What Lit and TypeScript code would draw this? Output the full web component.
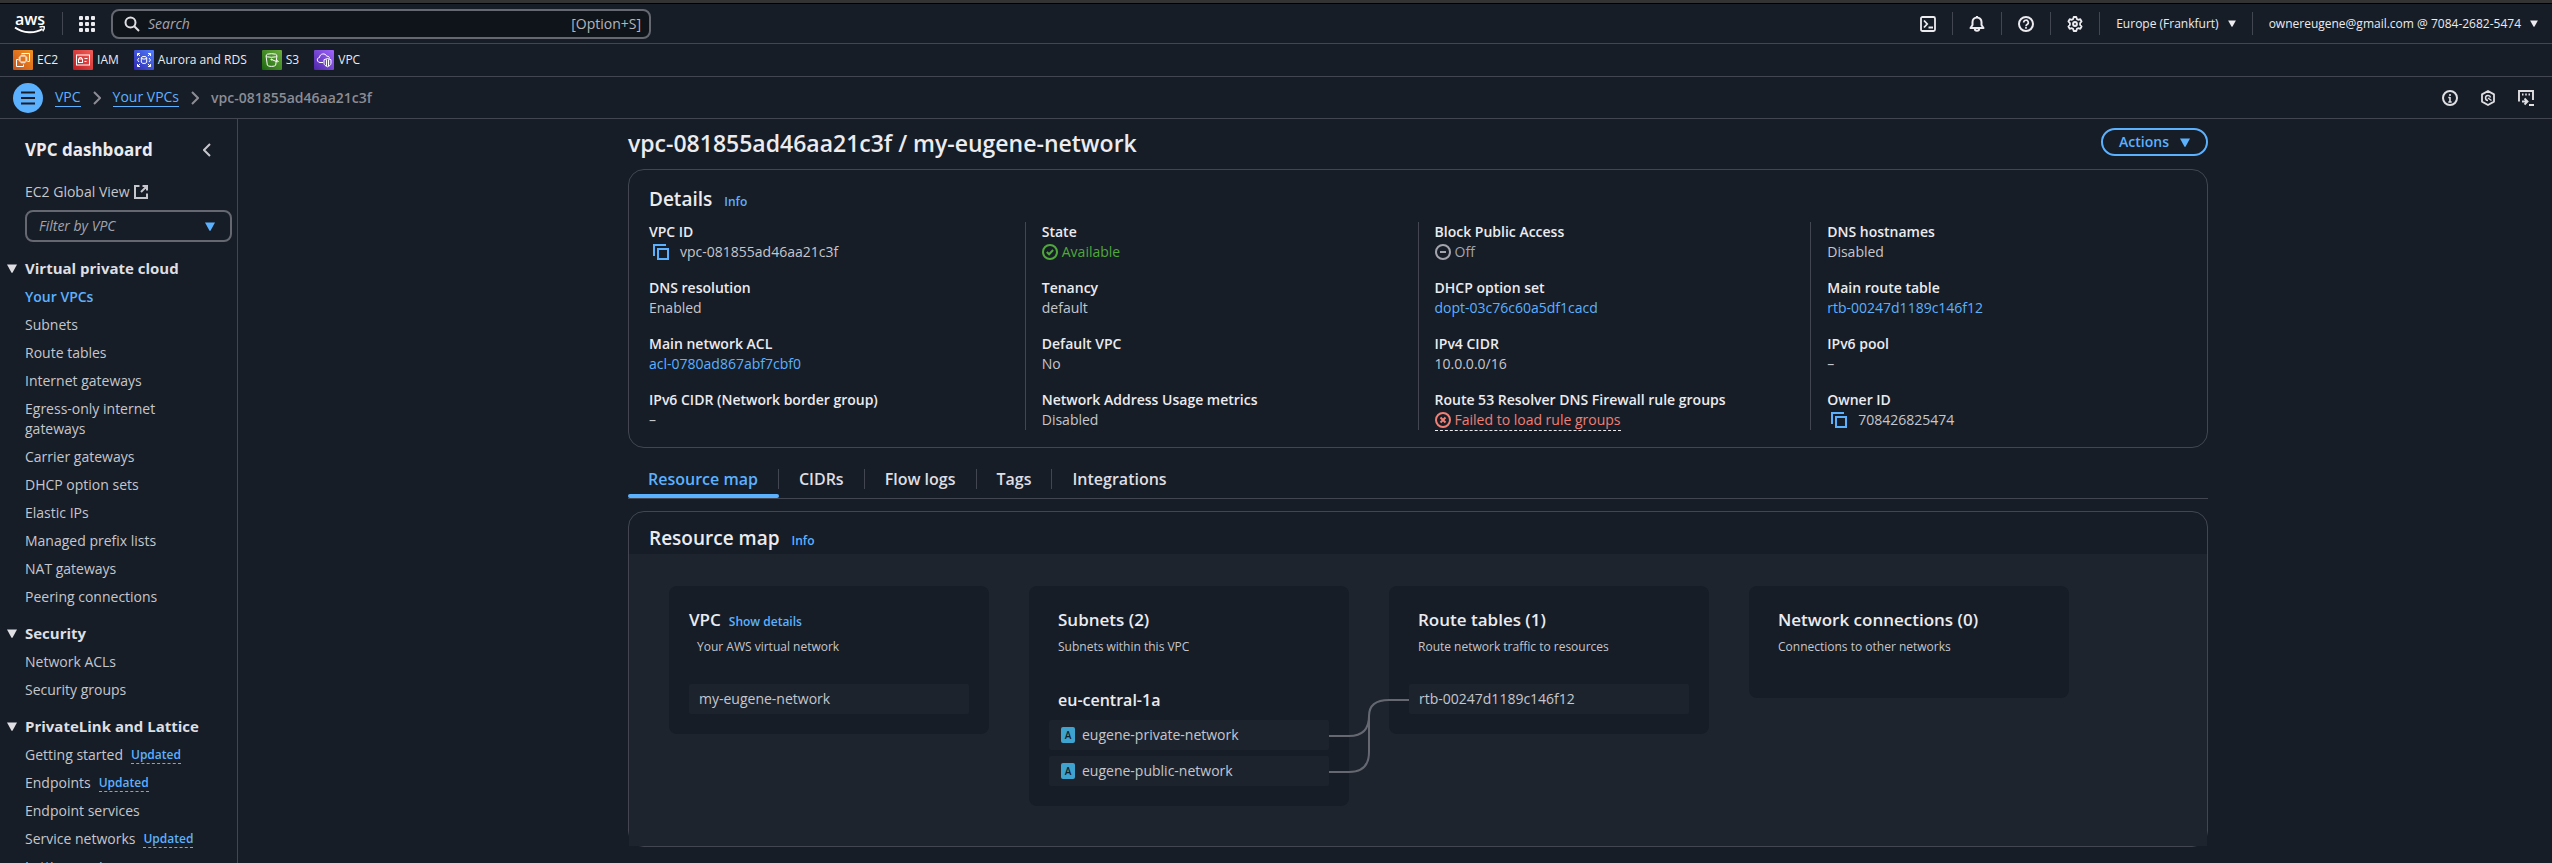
import { LitElement, html, svg, css, nothing, TemplateResult } from "lit";
import { customElement, property } from "lit/decorators.js";

const stroke = (body: TemplateResult, size = 16, width = 2) => html`
  <svg class="icon" width=${size} height=${size} viewBox="0 0 16 16" fill="none"
    stroke="currentColor" stroke-width=${width} aria-hidden="true">${body}</svg>`;

const icons = {
  grid: html`<svg class="icon" width="16" height="16" viewBox="0 0 16 16" fill="currentColor" aria-hidden="true">
    ${[0, 6, 12].map((y) => [0, 6, 12].map((x) => svg`<rect x=${x} y=${y} width="4" height="4" rx="1"/>`))}
  </svg>`,
  search: stroke(svg`<circle cx="6.5" cy="6.5" r="5"/><path d="M10.3 10.3 15 15"/>`),
  terminal: stroke(svg`<rect x="1" y="1" width="14" height="14" rx="1.5"/><path d="M4 4.5 7.2 8 4 11.5M8.5 11.5H13"/>`, 16, 1.8),
  bell: stroke(svg`<path d="M1.5 12h13l-2-3V6a4.5 4.5 0 0 0-9 0v3z" stroke-linejoin="round"/><path d="M8 0v1.5M5.8 12.5a2.2 2.2 0 0 0 4.4 0"/>`),
  help: stroke(svg`<circle cx="8" cy="8" r="7"/><path d="M5.7 6.5a2.3 2.3 0 1 1 3.4 2c-.8.5-1.1.8-1.1 1.7M8 11v1.8" stroke-width="1.7"/>`),
  gear: stroke(svg`<path d="m6.7 1h2.6l.6 2.1 1.3.7 2.1-.6 1.3 2.3-1.5 1.6v1.8l1.5 1.6-1.3 2.3-2.1-.6-1.3.7-.6 2.1H6.7l-.6-2.1-1.3-.7-2.1.6-1.3-2.3 1.5-1.6V7.1L1.4 5.5l1.3-2.3 2.1.6 1.3-.7z" stroke-linejoin="round" stroke-width="1.8"/><circle cx="8" cy="8" r="1.9"/>`),
  info: stroke(svg`<circle cx="8" cy="8" r="7"/><path d="M8 7v5M8 4v2M6.3 12h3.4M6.3 7.5H8" stroke-width="1.6"/>`),
  hex: stroke(svg`<path d="m8 1 6 3.4v7.2L8 15l-6-3.400V4.400z" stroke-linejoin="round" stroke-width="1.800"/><path d="M10.500 7.500A2.500 2.500 0 1 0 8 10.500M8 8l3.500 2.500" stroke-width="1.500"/>`),
  shell: stroke(svg`<path d="M1 11.500V1h14v9M4 11.500h5M6.500 8.500l3 3-3 3M4 4.500h1.500M7.200 4.500h1.600M10.500 4.500H12M11 15h5" stroke-width="1.900"/>`),
  menu: stroke(svg`<path d="M1 2.500h14M1 8h14M1 13.500h14"/>`),
  right: html`<svg class="icon" width="8" height="14" viewBox="0 0 8 14" fill="none" stroke="currentColor" stroke-width="2" aria-hidden="true"><path d="m1 1 6 6-6 6"/></svg>`,
  left: html`<svg class="icon" width="8" height="14" viewBox="0 0 8 14" fill="none" stroke="currentColor" stroke-width="2" aria-hidden="true"><path d="M7 1 1 7l6 6"/></svg>`,
  external: stroke(svg`<path d="M6.500 2H2v12h12V9.500M9.500 2H14v4.500M14 2 8 8" />`),
  copy: stroke(svg`<path d="M1 12V1h12"/><rect x="5" y="5" width="10" height="10"/>`),
  ok: stroke(svg`<circle cx="8" cy="8" r="7"/><path d="m4.800 8 2.300 2.300 4-4.300"/>`),
  off: stroke(svg`<circle cx="8" cy="8" r="7"/><path d="M5 8h6"/>`),
  fail: stroke(svg`<circle cx="8" cy="8" r="7"/><path d="m5.500 5.500 5 5m0-5-5 5"/>`),
};

const caret = (w: number) => html`<svg class="icon" width=${w} height=${w - 1} viewBox="0 0 10 9" fill="currentColor" aria-hidden="true"><path d="M0 .5h10L5.500 8.700h-1z"/></svg>`;

const service = (id: string, from: string, to: string, body: TemplateResult) => html`
  <svg class="icon" width="20" height="20" viewBox="0 0 20 20" fill="none" stroke="#fff" stroke-width="1" aria-hidden="true">
    <defs><linearGradient id=${id} x1="0" y1="1" x2="1" y2="0"><stop stop-color=${from}/><stop offset="1" stop-color=${to}/></linearGradient></defs>
    <rect width="20" height="20" rx="1" fill="url(#${id})" stroke="none"/>${body}
  </svg>`;

const favourites: [string, TemplateResult][] = [
  ["EC2", service("g1", "#c8511b", "#f29422", svg`<rect x="7" y="6" width="6" height="6" rx=".5"/><path d="M9 4.500V6m2-1.500V6M9 12v1.500m2-1.500v1.500M5.500 8H7m-1.500 2H7m6-2h1.500M13 10h1.500M8.500 3.500h8v8h-2M5.500 9.500h-2v7h7v-2"/>`)],
  ["IAM", service("g2", "#bd1c20", "#f2605a", svg`<rect x="3.500" y="5" width="13" height="10"/><rect x="5.500" y="9" width="4" height="3.500"/><path d="M6.500 9V7.500h2V9M11.500 8.500h3M11.500 11.500h2"/>`)],
  ["Aurora and RDS", service("g3", "#2e27ad", "#527fff", svg`<ellipse cx="10" cy="7.800" rx="2.700" ry="1.300"/><path d="M7.300 7.800v4.400c0 1.700 5.400 1.700 5.400 0V7.800M3.500 6V3.500H6M3.500 3.500 6 6M14 3.500h2.500V6m0-2.500L14 6M3.500 14v2.500H6m-2.500 0L6 14m8 2.500h2.500V14m0 2.500L14 14M5 8l-1.500 2L5 12m10-4 1.500 2-1.500 2"/>`)],
  ["S3", service("g4", "#1b660f", "#6cae3e", svg`<ellipse cx="9.500" cy="5.500" rx="5.500" ry="1.800"/><path d="m4 5.500 1.300 9.500c.2 1.800 8.200 1.800 8.400 0L15 5.500M9.500 9.500l5 2c2.500 1 2.500-.6.200-1.500"/><circle cx="9.500" cy="9.500" r=".6"/>`)],
  ["VPC", service("g5", "#4d27a8", "#a166ff", svg`<path d="M9 12.500H6c-3.500-.3-3.500-4.800-.5-5 .3-4.300 6-4.800 7.300-1.200 1.700-.4 2.700.7 2.600 2.200"/><path d="M13.500 8.500 17 9.700v3.500c0 1.800-1.800 3-3.500 3.600-1.700-.6-3.500-1.800-3.500-3.600V9.700zM12.500 9.500v6.500m2-6.500v6.500"/>`)],
];

type NavItem = [label: string, updated?: boolean];
const nav: { title: string; items: NavItem[] }[] = [
  {
    title: "Virtual private cloud",
    items: [["Your VPCs"], ["Subnets"], ["Route tables"], ["Internet gateways"], ["Egress-only internet gateways"],
      ["Carrier gateways"], ["DHCP option sets"], ["Elastic IPs"], ["Managed prefix lists"], ["NAT gateways"], ["Peering connections"]],
  },
  { title: "Security", items: [["Network ACLs"], ["Security groups"]] },
  {
    title: "PrivateLink and Lattice",
    items: [["Getting started", true], ["Endpoints", true], ["Endpoint services"], ["Service networks", true], ["Lattice services"]],
  },
];

const copyable = (text: string) => html`<span class="copyable"><button class="plain blue" aria-label="Copy ${text}">${icons.copy}</button>${text}</span>`;
const link = (text: string) => html`<a class="blue" href="#">${text}</a>`;

const details: [string, unknown][][] = [
  [
    ["VPC ID", copyable("vpc-081855ad46aa21c3f")],
    ["DNS resolution", "Enabled"],
    ["Main network ACL", link("acl-0780ad867abf7cbf0")],
    ["IPv6 CIDR (Network border group)", "–"],
  ],
  [
    ["State", html`<span class="status ok">${icons.ok}Available</span>`],
    ["Tenancy", "default"],
    ["Default VPC", "No"],
    ["Network Address Usage metrics", "Disabled"],
  ],
  [
    ["Block Public Access", html`<span class="status off">${icons.off}Off</span>`],
    ["DHCP option set", link("dopt-03c76c60a5df1cacd")],
    ["IPv4 CIDR", "10.0.0.0/16"],
    ["Route 53 Resolver DNS Firewall rule groups", html`<span class="status fail">${icons.fail}Failed to load rule groups</span>`],
  ],
  [
    ["DNS hostnames", "Disabled"],
    ["Main route table", link("rtb-00247d1189c146f12")],
    ["IPv6 pool", "–"],
    ["Owner ID", copyable("708426825474")],
  ],
];

const base = css`
  * { box-sizing: border-box; }
  h1, h2, h3, h4, p, ul, dl, dd { margin: 0; padding: 0; }
  h1, h2, h3, h4 { font-weight: 600; color: #ebebf0; }
  ul { list-style: none; }
  a { color: inherit; text-decoration: none; }
  button, input, select { font: inherit; color: inherit; margin: 0; }
  button { background: none; border: 0; padding: 0; cursor: pointer; }
  .icon { display: block; flex: none; }
  .blue { color: #5cb1ff; }
  .small { font-size: 12px; line-height: 16px; font-weight: 600; }
`;

@customElement("top-bar")
class TopBar extends LitElement {
  static styles = [base, css`
    :host { display: block; flex: none; }
    .strip { height: 4px; background: #333; border-bottom: 1px solid #000; }
    .row { display: flex; align-items: center; border-bottom: 1px solid #424650; }
    .head { height: 40px; gap: 16px; padding: 0 14px; color: #ebebf0; }
    .divider { width: 1px; height: 23px; background: #424650; }
    .search {
      flex: 0 1 540px; display: flex; align-items: center; gap: 8px; height: 30px; padding: 0 8px 0 11px;
      border: 2px solid #656871; border-radius: 8px; background: #0f141a; color: #b4b4bb; font-size: 14px;
    }
    .search input { flex: 1; min-width: 0; border: 0; outline: 0; background: none; padding: 0; }
    .search input::placeholder { color: #a4a4ad; font-style: italic; opacity: 1; }
    .search .icon { color: #dedee3; }
    .tools { margin-left: auto; display: flex; align-items: center; gap: 16px; font-size: 12px; font-weight: 500; }
    .menu { display: flex; align-items: center; gap: 9px; white-space: nowrap; }
    .favs { height: 33px; gap: 15px; padding: 0 13px; font-size: 12px; font-weight: 500; color: #ebebf0; }
    .favs a { display: flex; align-items: center; gap: 4px; }
    .crumbs { height: 42px; gap: 12px; padding: 0 18px 0 13px; font-size: 14px; color: #8c8c94; font-weight: 500; }
    .crumbs a { color: #5cb1ff; line-height: 18px; border-bottom: 1px solid #5cb1ff; }
    .crumbs .here { font-weight: 600; }
    .round { width: 30px; height: 30px; border-radius: 50%; background: #5cb1ff; color: #161d26; display: grid; place-items: center; }
    .panels { margin-left: auto; display: flex; gap: 22px; color: #dedee3; }
  `];
  render() {
    return html`
      <div class="strip"></div>
      <header class="row head">
        <a href="#" aria-label="AWS home">
          <svg class="icon" width="32" height="36" viewBox="0 -8 32 36" aria-hidden="true">
            <text x="16" y="11" text-anchor="middle" font-size="16" font-weight="600" fill="#fff">aws</text>
            <path d="M1 13.500c8 6 20 6.200 27.500 1.500" fill="none" stroke="#fff" stroke-width="2"/>
            <path d="M25.500 13c2-.6 4-.7 4.800-.2.300 1-.4 3-1.600 4.400" fill="none" stroke="#fff" stroke-width="1.500"/>
          </svg>
        </a>
        <span class="divider"></span>
        <button aria-label="Services">${icons.grid}</button>
        <label class="search">${icons.search}<input type="text" placeholder="Search" aria-label="Search"><span>[Option+S]</span></label>
        <div class="tools">
          <button aria-label="CloudShell">${icons.terminal}</button><span class="divider"></span>
          <button aria-label="Notifications">${icons.bell}</button><span class="divider"></span>
          <button aria-label="Support">${icons.help}</button><span class="divider"></span>
          <button aria-label="Settings">${icons.gear}</button><span class="divider"></span>
          <button class="menu">Europe (Frankfurt)${caret(8)}</button><span class="divider"></span>
          <button class="menu">ownereugene@gmail.com @ 7084-2682-5474${caret(8)}</button>
        </div>
      </header>
      <nav class="row favs" aria-label="Favorites">${favourites.map(([name, icon]) => html`<a href="#">${icon}${name}</a>`)}</nav>
      <nav class="row crumbs" aria-label="Breadcrumbs">
        <button class="round" aria-label="Navigation">${icons.menu}</button>
        <a href="#">VPC</a>${icons.right}<a href="#">Your VPCs</a>${icons.right}<span class="here">vpc-081855ad46aa21c3f</span>
        <div class="panels">
          <button aria-label="Info">${icons.info}</button>
          <button aria-label="Assistant">${icons.hex}</button>
          <button aria-label="Shell">${icons.shell}</button>
        </div>
      </nav>`;
  }
}

@customElement("side-nav")
class SideNav extends LitElement {
  static styles = [base, css`
    :host { display: block; flex: none; width: 238px; overflow: hidden; border-right: 1px solid #424650; padding: 19px 5px 0 25px; }
    .title { display: flex; align-items: center; justify-content: space-between; padding-right: 21px; }
    h2 { font-size: 17px; line-height: 24px; font-weight: 700; }
    .global { display: flex; align-items: center; gap: 4px; margin: 20px 0 8px; }
    .filter { position: relative; display: block; color: #5cb1ff; }
    select {
      appearance: none; width: 100%; height: 32px; padding: 0 12px; border: 2px solid #656871; border-radius: 8px;
      background: #161d26; color: #a4a4ad; font-style: italic;
    }
    .filter .icon { position: absolute; right: 17px; top: 12px; pointer-events: none; }
    h3 { font-size: 15px; line-height: 22px; font-weight: 700; margin: 15px 0 8px -18px; color: #dedee3; }
    h3 button { display: flex; align-items: center; gap: 8px; white-space: nowrap; }
    ul { display: grid; gap: 8px; padding-right: 50px; }
    li { display: flex; align-items: center; gap: 8px; }
    li.tagged { height: 20px; white-space: nowrap; }
    .current { color: #5cb1ff; font-weight: 600; }
    .updated { border-bottom: 1px dashed #5cb1ff; }
  `];
  render() {
    return html`
      <div class="title"><h2>VPC dashboard</h2><button aria-label="Close navigation">${icons.left}</button></div>
      <a class="global" href="#">EC2 Global View ${icons.external}</a>
      <label class="filter">
        <select aria-label="Filter by VPC"><option>Filter by VPC</option></select>${caret(10)}
      </label>
      ${nav.map((group, g) => html`
        <h3><button aria-expanded="true">${caret(10)}${group.title}</button></h3>
        <ul>${group.items.map(([label, updated], i) => html`
          <li class=${updated ? "tagged" : ""}>
            <a class=${g === 0 && i === 0 ? "current" : ""} href="#">${label}</a>
            ${updated ? html`<span class="small blue updated">Updated</span>` : nothing}
          </li>`)}
        </ul>`)}`;
  }
}

@customElement("map-card")
class MapCard extends LitElement {
  @property() heading = "";
  @property() note = "";
  @property({ type: Boolean, reflect: true }) root = false;
  static styles = [base, css`
    :host { display: block; flex: 0 1 320px; padding: 23px 20px 20px; border-radius: 8px; background: #161d26; }
    .head { padding: 0 0 23px 9px; }
    :host([root]) .head { padding-left: 0; }
    :host([root]) p { padding-left: 8px; }
    .title { display: flex; align-items: baseline; gap: 8px; }
    h3 { font-size: 17px; line-height: 22px; }
    p { margin-top: 8px; font-size: 12px; line-height: 16px; }
  `];
  render() {
    return html`
      <div class="head">
        <div class="title"><h3>${this.heading}</h3>${this.root ? html`<a class="small blue" href="#">Show details</a>` : nothing}</div>
        <p>${this.note}</p>
      </div>
      <slot></slot>`;
  }
}

@customElement("app-root")
class AppRoot extends LitElement {
  static styles = [base, css`
    :host {
      display: flex; flex-direction: column; height: 100vh; overflow: hidden; background: #161d26; color: #c6c6cd;
      font: 400 14px/20px "Open Sans", "Noto Sans", sans-serif;
    }
    .body { flex: 1; display: flex; min-height: 0; }
    main { flex: 1; min-width: 0; padding: 9px 0 0 46px; overflow: hidden; }
    .content { max-width: 1580px; margin: 0 auto; }
    .page-title { display: flex; justify-content: space-between; align-items: flex-start; margin-bottom: 11px; }
    h1 { font-size: 23px; line-height: 30px; }
    h2 { font-size: 19px; line-height: 24px; }
    .actions {
      display: flex; align-items: center; gap: 11px; height: 28px; padding: 0 16px; border: 2px solid #5cb1ff;
      border-radius: 14px; font-weight: 600;
    }
    .card { border: 1px solid #424650; border-radius: 16px; }
    .heading { display: flex; align-items: baseline; gap: 12px; }
    .details { padding: 17px 20px; }
    .columns { display: grid; grid-template-columns: repeat(4, 1fr); gap: 33px; margin-top: 11px; }
    dl { display: grid; gap: 16px; }
    dl + dl { margin-left: -17px; padding-left: 16px; border-left: 1px solid #424650; }
    dt { white-space: nowrap; font-weight: 550; color: #ebebf0; }
    dd { display: flex; height: 20px; }
    .copyable { display: flex; align-items: center; gap: 11px; padding-left: 4px; }
    .status { display: flex; align-items: center; gap: 4px; }
    .ok { color: #50a83c; }
    .off { color: #a4a4ad; }
    .fail { color: #f07f76; height: 21px; border-bottom: 1px dashed #ebebf0; }
    .tabs { display: flex; padding-top: 21px; border-bottom: 1px solid #424650; }
    .tab { display: block; font-size: 16px; line-height: 20px; font-weight: 550; color: #dedee3; }
    .tab span { display: block; padding: 0 20px; border-right: 1px solid #424650; }
    .tab:last-child span { border-right: 0; }
    .tab::after { content: ""; display: block; height: 4px; margin-top: 5px; border-radius: 2px; }
    .tab.on { color: #5cb1ff; }
    .tab.on::after { background: #5cb1ff; }
    .map { margin-top: 12px; }
    .map .heading { padding: 14px 20px 4px; }
    .canvas { display: flex; align-items: flex-start; gap: 40px; padding: 32px 40px 40px; background: #1d242d; }
    h4 { font-size: 16px; line-height: 20px; font-weight: 550; padding: 6px 9px 10px; }
    .nodes { display: grid; gap: 6px; }
    .nodes.first { margin-top: 6px; }
    .node { display: flex; align-items: center; gap: 7px; height: 30px; padding: 0 10px; border-radius: 2px; background: #1c232d; }
    .node.zoned { padding: 0 12px; }
    .badge { width: 14px; height: 16px; border-radius: 2px; background: #3fa3cf; color: #10202b; font-size: 10px; line-height: 16px; text-align: center; font-weight: 600; }
    .zone { margin-top: 6px; }
    .subnets { position: relative; }
    .wires { position: absolute; z-index: 1; left: 100%; top: 104px; margin-left: -20px; }
  `];
  render() {
    return html`
      <top-bar></top-bar>
      <div class="body">
        <side-nav></side-nav>
        <main><div class="content">
          <div class="page-title">
            <h1>vpc-081855ad46aa21c3f / my-eugene-network</h1>
            <button class="actions blue">Actions ${caret(10)}</button>
          </div>
          <section class="card details">
            <div class="heading"><h2>Details</h2><a class="small blue" href="#">Info</a></div>
            <div class="columns">${details.map((column) => html`
              <dl>${column.map(([label, value]) => html`<div><dt>${label}</dt><dd>${value}</dd></div>`)}</dl>`)}
            </div>
          </section>
          <div class="tabs" role="tablist">${["Resource map", "CIDRs", "Flow logs", "Tags", "Integrations"].map((tab, i) => html`
            <button class="tab ${i === 0 ? "on" : ""}" role="tab" aria-selected=${i === 0}><span>${tab}</span></button>`)}
          </div>
          <section class="card map">
            <div class="heading"><h2>Resource map</h2><a class="small blue" href="#">Info</a></div>
            <div class="canvas">
              <map-card root heading="VPC" note="Your AWS virtual network">
                <div class="nodes first"><div class="node">my-eugene-network</div></div>
              </map-card>
              <map-card class="subnets" heading="Subnets (2)" note="Subnets within this VPC">
                <div class="zone">
                  <h4>eu-central-1a</h4>
                  <div class="nodes">${["eugene-private-network", "eugene-public-network"].map((name) => html`
                    <div class="node zoned"><span class="badge">A</span>${name}</div>`)}
                  </div>
                </div>
                <svg class="wires" width="80" height="96" viewBox="0 0 80 96" fill="none" stroke="#656871" stroke-width="2" aria-hidden="true">
                  <path d="M0 46h20q20 0 20-20M0 82h20q20 0 20-20V26q0-16 20-16h20"/>
                </svg>
              </map-card>
              <map-card heading="Route tables (1)" note="Route network traffic to resources">
                <div class="nodes first"><div class="node">rtb-00247d1189c146f12</div></div>
              </map-card>
              <map-card heading="Network connections (0)" note="Connections to other networks"></map-card>
            </div>
          </section>
        </div></main>
      </div>`;
  }
}
